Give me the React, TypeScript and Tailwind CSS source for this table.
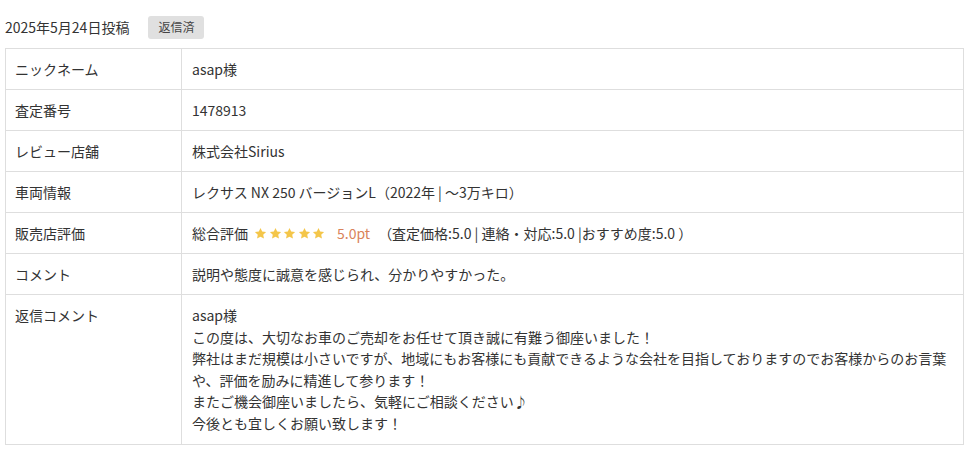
import React from "react";

const Star = () => (
  <svg width="13" height="13" viewBox="0 0 24 24" className="inline-block">
    <path d="M12 1.8l3.1 6.6 7.2.9-5.3 5 1.4 7.1L12 17.9l-6.4 3.5 1.4-7.1-5.3-5 7.2-.9z" fill="#f4c64a" />
  </svg>
);

const rows: { label: string; value: React.ReactNode }[] = [
  { label: "ニックネーム", value: "asap様" },
  { label: "査定番号", value: "1478913" },
  { label: "レビュー店舗", value: "株式会社Sirius" },
  { label: "車両情報", value: "レクサス NX 250 バージョンL（2022年 | 〜3万キロ）" },
  {
    label: "販売店評価",
    value: (
      <span className="flex items-center h-[20px]">
        <span>総合評価</span>
        <span className="ml-[6px] flex gap-[1.5px]">
          <Star />
          <Star />
          <Star />
          <Star />
          <Star />
        </span>
        <span className="ml-[12px] text-[#d9835a]">5.0pt</span>
        <span className="ml-[8px]">（査定価格:5.0 | 連絡・対応:5.0 |おすすめ度:5.0 ）</span>
      </span>
    ),
  },
  { label: "コメント", value: "説明や態度に誠意を感じられ、分かりやすかった。" },
  {
    label: "返信コメント",
    value: (
      <div className="leading-[21.5px]">
        asap様
        <br />
        この度は、大切なお車のご売却をお任せて頂き誠に有難う御座いました！
        <br />
        弊社はまだ規模は小さいですが、地域にもお客様にも貢献できるような会社を目指しておりますのでお客様からのお言葉や、評価を励みに精進して参ります！
        <br />
        またご機会御座いましたら、気軽にご相談ください♪
        <br />
        今後とも宜しくお願い致します！
      </div>
    ),
  },
];

export default function App() {
  return (
    <div
      className="w-[980px] h-[451px] bg-white text-[#333] text-[14px]"
      style={{ fontFamily: '"Noto Sans CJK JP", "Noto Sans", sans-serif' }}
    >
      <div className="pl-[5px] pt-[15px] flex items-center h-[48px] pb-[9px]">
        <span className="leading-[24px]">2025年5月24日投稿</span>
        <span className="ml-[19px] bg-[#e0e0e0] text-[12px] rounded-[3px] w-[56px] h-[23px] flex items-center justify-center text-[#444]">
          返信済
        </span>
      </div>
      <div className="ml-[5px] w-[959px] border border-[#dedede]">
        {rows.map((r, i) => (
          <div key={i} className={`flex ${i > 0 ? "border-t border-[#dedede]" : ""}`}>
            <div className="w-[176px] shrink-0 px-[9px] py-[10px] leading-[20px] border-r border-[#dedede]">
              {r.label}
            </div>
            <div className="flex-1 pl-[10px] pr-[8px] py-[10px] leading-[20px]">{r.value}</div>
          </div>
        ))}
      </div>
    </div>
  );
}
